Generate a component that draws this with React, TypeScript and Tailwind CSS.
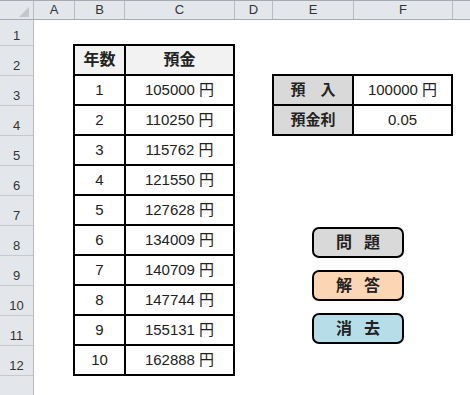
import React from 'react';

const cols = [
  { name: 'A', w: 'w-[41px]' },
  { name: 'B', w: 'w-[50px]' },
  { name: 'C', w: 'w-[110px]' },
  { name: 'D', w: 'w-[38px]' },
  { name: 'E', w: 'w-[81px]' },
  { name: 'F', w: 'w-[99px]' },
];

const deposits = [105000, 110250, 115762, 121550, 127628, 134009, 140709, 147744, 155131, 162888];

const buttons = [
  { label: ['問', '題'], bg: 'bg-[#d9d9d9]' },
  { label: ['解', '答'], bg: 'bg-[#fcd5b4]' },
  { label: ['消', '去'], bg: 'bg-[#b7dee8]' },
];

export default function App() {
  return (
    <div className="w-[470px] h-[395px] overflow-hidden bg-white flex flex-col text-[#222] font-['Liberation_Sans','Noto_Sans_CJK_JP',sans-serif]">
      {/* column letters */}
      <div className="flex h-[20px] shrink-0 bg-[#e3e6ea] border-t border-b border-[#a6abb1] text-[13px] text-[#333]">
        <div className="w-[34px] border-r border-[#b9bdc2] relative">
          <div className="absolute right-[4px] bottom-[2px] w-0 h-0 border-l-[10px] border-l-transparent border-b-[10px] border-b-[#c3c6ca]" />
        </div>
        {cols.map((c) => (
          <div key={c.name} className={`${c.w} border-r border-[#b9bdc2] flex items-center justify-center`}>
            {c.name}
          </div>
        ))}
        <div className="flex-1" />
      </div>

      <div className="flex flex-1 min-h-0">
        {/* row numbers */}
        <div className="w-[34px] shrink-0 bg-[#e3e6ea] border-r border-[#b9bdc2] flex flex-col text-[13px] text-[#333]">
          <div className="h-[26px] border-b border-[#c6c9ce] flex items-end justify-center">1</div>
          {Array.from({ length: 11 }, (_, i) => (
            <div key={i} className="h-[30px] border-b border-[#c6c9ce] flex items-end justify-center">
              {i + 2}
            </div>
          ))}
          <div className="flex-1" />
        </div>

        {/* sheet */}
        <div className="flex-1 flex items-start pl-[39px] pt-[24px]">
          <div className="w-[162px] border-2 border-black flex flex-col text-[15px]">
            <div className="h-[28px] flex bg-[#f2f2f2] font-bold text-[16px]">
              <div className="w-[51px] border-r-2 border-black flex items-center justify-center">年数</div>
              <div className="flex-1 flex items-center justify-center">預金</div>
            </div>
            {deposits.map((d, i) => (
              <div key={d} className="h-[30px] flex border-t-2 border-black">
                <div className="w-[51px] border-r-2 border-black flex items-center justify-center">{i + 1}</div>
                <div className="flex-1 flex items-center justify-center">{d} 円</div>
              </div>
            ))}
          </div>

          <div className="ml-[37px] mt-[30px] flex flex-col">
            <div className="w-[181px] border-2 border-black flex flex-col text-[15px]">
              <div className="h-[28px] flex">
                <div className="w-[80px] border-r-2 border-black bg-[#d9d9d9] font-bold flex items-center justify-center">預　入</div>
                <div className="flex-1 flex items-center justify-center">100000 円</div>
              </div>
              <div className="h-[30px] flex border-t-2 border-black">
                <div className="w-[80px] border-r-2 border-black bg-[#d9d9d9] font-bold flex items-center justify-center">預金利</div>
                <div className="flex-1 flex items-center justify-center">0.05</div>
              </div>
            </div>

            {/* macro buttons */}
            <div className="ml-[40px] mt-[91px] flex flex-col gap-[12px]">
              {buttons.map((b) => (
                <div
                  key={b.label[0]}
                  className={`w-[92px] h-[31px] rounded-[7px] border-2 border-black ${b.bg} flex items-center justify-center gap-[12px] text-[16px] font-bold`}
                >
                  <span>{b.label[0]}</span>
                  <span>{b.label[1]}</span>
                </div>
              ))}
            </div>
          </div>
        </div>
      </div>
    </div>
  );
}
